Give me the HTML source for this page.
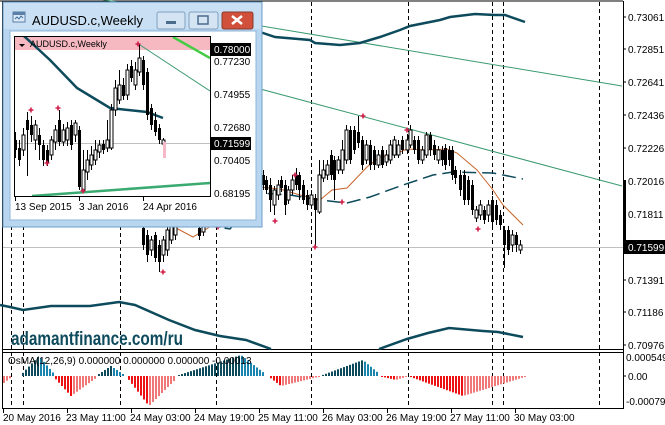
<!DOCTYPE html>
<html><head><meta charset="utf-8"><style>
html,body{margin:0;padding:0;background:#fff;width:665px;height:425px;overflow:hidden}
svg{display:block;font-family:"Liberation Sans",sans-serif}
</style></head><body>
<svg id="s" width="665" height="425" viewBox="0 0 665 425" xmlns="http://www.w3.org/2000/svg">
<rect x="0" y="0" width="665" height="425" fill="#fff"/>
<line x1="0" y1="1" x2="623" y2="1" stroke="#000"/>
<line x1="2.5" y1="1" x2="2.5" y2="408" stroke="#000"/>
<line x1="623.5" y1="1" x2="623.5" y2="409" stroke="#000"/>
<line x1="2" y1="349.5" x2="624" y2="349.5" stroke="#000"/>
<line x1="2" y1="352.5" x2="624" y2="352.5" stroke="#000"/>
<line x1="2" y1="408.5" x2="624" y2="408.5" stroke="#000"/>
<g id="vd" stroke="#000" stroke-dasharray="4 3"></g>
<line x1="3" y1="247.5" x2="623" y2="247.5" stroke="#c0c0c0"/>
<line x1="3" y1="-17" x2="622" y2="86" stroke="#3a9a70" stroke-width="1"/>
<line x1="3" y1="20" x2="622" y2="186" stroke="#3a9a70" stroke-width="1"/>
<polyline fill="none" stroke="#0d4a5c" stroke-width="2.5" points="260,32 275,37 310,40 315,43 340,45 360,43 380,37 400,30 410,26 440,20 450,17 475,14 495,15 505,15 525,22"/>
<polyline fill="none" stroke="#0d4a5c" stroke-width="2.5" points="0,305 10,307 23,310 51,306 90,306 119,302 135,305 169,320 195,330 220,336 246,340 271,349"/>
<polyline fill="none" stroke="#0d4a5c" stroke-width="2.5" points="379,349 407,339 428,333 449,328 483,331 498,332 523,337"/>
<polyline fill="none" stroke="#0d4a5c" stroke-width="1.5" stroke-dasharray="14 6" points="185,222 230,229 260,193 290,195 320,200 347,203 370,197 403,185 433,175 453,172 493,173 523,179"/>
<polyline fill="none" stroke="#c8642a" stroke-width="1" points="176,228 193,237 208,228 230,210 260,187 280,189 300,195 320,200 332,190 347,188 367,167 380,157 393,155 407,149 427,150 447,149 457,153 477,170 493,190 503,205 523,225"/>
<g id="mc"></g>
<g id="st" fill="#d0204a"></g>
<text x="11" y="345" font-size="19" font-weight="bold" fill="#0d4a5c" textLength="172" lengthAdjust="spacingAndGlyphs">adamantfinance.com/ru</text>
<g id="hist"></g>
<text x="8" y="364" font-size="10" fill="#000">OsMA(12,26,9) 0.000000 0.000000 0.000000 -0.00013</text>
<g font-size="10" fill="#000">
<text x="628" y="21">0.73061</text><text x="628" y="53">0.72851</text><text x="628" y="86">0.72641</text>
<text x="628" y="119">0.72436</text><text x="628" y="152">0.72226</text><text x="628" y="185">0.72016</text>
<text x="628" y="218">0.71811</text><text x="628" y="284">0.71391</text><text x="628" y="316">0.71186</text>
<text x="628" y="349">0.70976</text><text x="626" y="361">0.000549</text><text x="628" y="380">0.00</text><text x="626" y="405">-0.00079</text>
</g>
<g stroke="#000"><line x1="623" y1="17" x2="626" y2="17"/><line x1="623" y1="49" x2="626" y2="49"/><line x1="623" y1="82" x2="626" y2="82"/><line x1="623" y1="115" x2="626" y2="115"/><line x1="623" y1="148" x2="626" y2="148"/><line x1="623" y1="214" x2="626" y2="214"/><line x1="623" y1="280" x2="626" y2="280"/><line x1="623" y1="312" x2="626" y2="312"/><line x1="623" y1="345" x2="626" y2="345"/><line x1="623" y1="376" x2="626" y2="376"/></g>
<rect x="623" y="180" width="3" height="67" fill="#000"/>
<rect x="624" y="240" width="41" height="14" fill="#000"/>
<text x="628" y="251" font-size="10" fill="#fff">0.71599</text>
<g font-size="10" fill="#000">
<text x="3" y="421">20 May 2016</text><text x="66" y="421">23 May 11:00</text><text x="130" y="421">24 May 03:00</text>
<text x="194" y="421">24 May 19:00</text><text x="258" y="421">25 May 11:00</text><text x="322" y="421">26 May 03:00</text>
<text x="386" y="421">26 May 19:00</text><text x="450" y="421">27 May 11:00</text><text x="514" y="421">30 May 03:00</text>
</g>
<g stroke="#000"><line x1="3.5" y1="409" x2="3.5" y2="413"/><line x1="67.5" y1="409" x2="67.5" y2="413"/><line x1="131.5" y1="409" x2="131.5" y2="413"/><line x1="195.5" y1="409" x2="195.5" y2="413"/><line x1="259.5" y1="409" x2="259.5" y2="413"/><line x1="323.5" y1="409" x2="323.5" y2="413"/><line x1="387.5" y1="409" x2="387.5" y2="413"/><line x1="451.5" y1="409" x2="451.5" y2="413"/><line x1="515.5" y1="409" x2="515.5" y2="413"/></g>

<rect x="3" y="2" width="259" height="225" fill="#b8d6f0" stroke="#6f9fc8"/>
<rect x="4" y="3" width="257" height="26" fill="#c9e0f4"/>
<rect x="10" y="31" width="246" height="189" fill="#fff" stroke="#8fb5d8"/>
<g transform="translate(13,12)"><rect x="0" y="0" width="12" height="10" fill="#dde9f5" stroke="#5a7fa8"/><rect x="0" y="0" width="12" height="3" fill="#5a7fa8"/><path d="M2 7 l2 -2 2 2 2 -3 2 2" stroke="#3a70a0" fill="none"/></g>
<text x="32" y="25" font-size="13" fill="#000">AUDUSD.c,Weekly</text>
<rect x="157" y="12" width="28" height="17" rx="2" fill="#d4e4f2" stroke="#7f9fbf"/>
<rect x="166" y="21" width="10" height="3" fill="#4b6b8b"/>
<rect x="189" y="12" width="29" height="17" rx="2" fill="#d4e4f2" stroke="#7f9fbf"/>
<rect x="198" y="16" width="10" height="8" fill="none" stroke="#4b6b8b" stroke-width="1.5"/>
<rect x="222" y="12" width="31" height="17" rx="2" fill="#d0503c" stroke="#8a3a2c"/>
<path d="M232 16 l10 8 M242 16 l-10 8" stroke="#fff" stroke-width="2.5"/>
<svg x="14" y="36" width="196" height="160" viewBox="14 36 196 160" overflow="hidden">
<rect x="14" y="36" width="196" height="14" fill="#f6b9c2"/>
<line x1="14" y1="143.5" x2="210" y2="143.5" stroke="#c0c0c0"/>
<line x1="137" y1="43" x2="210" y2="91" stroke="#3a9a70"/>
<line x1="173" y1="37" x2="210" y2="58" stroke="#44cc44" stroke-width="2.5"/>
<line x1="32" y1="196" x2="210" y2="183" stroke="#3aaa70" stroke-width="2.5"/>
<polyline fill="none" stroke="#0d4a5c" stroke-width="2.5" points="20,33 25,37 50,60 77,88 110,108 147,112 163,118"/>
<g id="ic"></g>
<rect x="163" y="142" width="3" height="16" fill="#f4b8c6"/>
<g fill="#d0204a" id="ist"></g>
<path d="M19 44 l6 0 -3 3z" fill="#000"/>
<text x="30" y="47" font-size="9" fill="#000">AUDUSD.c,Weekly</text>
</svg>
<rect x="14.5" y="36.5" width="196" height="160" fill="none" stroke="#000"/>
<g font-size="10" fill="#000">
<text x="214" y="65">0.77230</text><text x="214" y="98">0.74955</text><text x="214" y="131">0.72680</text>
<text x="214" y="164">0.70405</text><text x="214" y="197">0.68195</text>
<text x="15" y="210">13 Sep 2015</text><text x="79" y="210">3 Jan 2016</text><text x="143" y="210">24 Apr 2016</text>
</g>
<rect x="211" y="43" width="40" height="13" fill="#000"/><text x="214" y="53" font-size="10" fill="#fff">0.78000</text>
<rect x="211" y="137" width="40" height="13" fill="#000"/><text x="214" y="147" font-size="10" fill="#fff">0.71599</text>
<g stroke="#000"><line x1="15.5" y1="197" x2="15.5" y2="201"/><line x1="79.5" y1="197" x2="79.5" y2="201"/><line x1="143.5" y1="197" x2="143.5" y2="201"/></g>
</svg>
<script>
var NS="http://www.w3.org/2000/svg";
function el(p,t,a){var e=document.createElementNS(NS,t);for(var k in a)e.setAttribute(k,a[k]);p.appendChild(e);return e;}
var vd=document.getElementById('vd');
[11,23,120,216,311,408,492,503,599].forEach(function(x){el(vd,'line',{x1:x+.5,y1:2,x2:x+.5,y2:408});});
function candles(g,arr){arr.forEach(function(c){var x=c[0],t=c[1],b=c[2],h=c[3]||t-4,l=c[4]||b+4,f=c[5];
el(g,'line',{x1:x+.5,y1:h,x2:x+.5,y2:l,stroke:'#000'});
el(g,'rect',{x:x-1,y:t,width:3,height:Math.max(1,b-t),fill:f?'#000':'#fff',stroke:'#000','stroke-width':f?0:1});});}
candles(document.getElementById('mc'),[
[143,228,245,225,250,1],[147,235,255,230,262,1],[151,240,250,236,256,0],[155,235,258,232,262,1],[159,245,262,240,272,1],[163,240,255,236,262,0],[167,230,250,226,256,0],[171,215,240,210,244,0],[175,220,235,216,240,0],
[199,228,236,226,240,1],[203,226,232,224,236,0],
[263,175,185,170,190,1],[266,180,190,176,194,1],[270,185,200,178,212,1],[274,190,205,186,215,0],[278,185,195,180,200,0],[281,180,188,176,192,1],[285,185,205,180,215,1],[288,190,200,186,204,0],[292,180,190,175,195,0],[296,175,185,168,190,1],[299,175,190,172,200,1],[303,185,200,180,204,1],[307,195,205,190,210,1],[311,195,205,190,208,0],[315,198,210,194,247,1],[319,175,212,160,214,0],[323,170,178,160,182,0],[327,165,175,160,180,0],[331,155,175,150,180,1],[334,160,180,156,200,1],[338,160,170,156,174,0],[342,150,170,140,174,0],[346,130,160,125,164,0],[350,130,160,126,164,1],[354,130,150,126,154,1],[358,132,143,116,148,1],[362,140,165,136,170,1],[366,145,160,140,164,0],[370,145,165,140,170,1],[374,150,165,146,170,1],[378,155,165,150,168,0],[382,150,165,146,168,1],[386,155,162,150,166,0],[390,145,160,140,164,0],[394,140,155,136,158,0],[398,145,155,140,158,0],[402,140,150,136,154,1],[407,140,150,134,154,0],[410,130,145,125,148,0],[414,140,150,136,154,1],[418,140,160,136,164,1],[422,150,160,146,164,0],[426,135,155,132,158,0],[430,135,150,132,156,1],[434,145,155,140,160,1],[438,150,160,146,164,0],[442,150,160,146,166,1],[445,148,165,144,170,1],[449,150,160,146,166,1],[452,150,175,146,180,1],[455,170,178,166,184,1],[460,175,190,170,196,1],[464,175,200,170,205,1],[468,180,200,176,205,1],[472,185,210,180,215,1],[476,210,218,206,222,0],[480,205,215,200,220,0],[484,210,220,206,224,1],[488,205,215,200,222,0],[492,200,222,196,226,1],[496,205,220,200,225,1],[500,215,225,210,230,1],[504,230,245,226,268,1],[508,230,250,226,255,1],[512,235,245,230,252,0],[516,235,245,232,252,1],[520,245,250,240,254,0]
]);
function star(g,x,y){el(g,'path',{d:'M'+(x-2.5)+' '+y+'h5M'+x+' '+(y-2.5)+'v5',stroke:'#d0204a','stroke-width':1.6});}
var st=document.getElementById('st');
[[163,272],[218,227],[275,221],[295,175],[315,247],[342,202],[363,116],[407,130],[478,229]].forEach(function(p){star(st,p[0],p[1]);});
candles(document.getElementById('ic'),[
[15,140,150,132,158,1],[19,148,160,140,166,1],[23,135,150,128,156,0],[27,120,130,112,176,1],[31,125,135,116,142,1],[35,125,140,120,150,0],[39,135,145,128,160,1],[43,145,160,140,166,1],[47,150,163,145,166,1],[51,140,155,136,160,0],[55,130,142,125,150,0],[59,120,142,110,146,1],[63,130,142,124,146,0],[67,128,140,122,146,0],[71,125,145,120,150,1],[75,123,135,120,142,0],[79,130,187,126,190,1],[83,170,190,150,192,0],[87,160,172,150,180,0],[91,155,165,146,170,0],[95,150,160,140,165,0],[99,145,152,140,158,0],[103,144,150,140,154,1],[107,140,148,120,152,0],[111,110,148,104,150,0],[115,88,110,80,116,0],[119,85,100,70,104,0],[123,85,96,78,100,1],[127,70,95,64,100,0],[131,66,78,60,82,1],[135,70,85,62,90,0],[139,58,72,44,76,0],[143,60,85,56,90,1],[147,72,115,68,120,1],[151,108,125,104,130,1],[155,120,132,112,136,1],[159,128,140,124,144,1],[163,140,144,138,148,0]
]);
var ist=document.getElementById('ist');
[[31,110],[58,108],[47,163],[83,191],[138,44]].forEach(function(p){star(ist,p[0],p[1]);});
var hg=document.getElementById('hist');
function seg(x0,x1,peak,px,c1,c2){for(var x=x0;x<=x1;x+=3){var h;if(x<=px)h=peak*(x-x0+3)/(px-x0+3);else h=peak*(x1-x+3)/(x1-px+3);
var col=x<=px?c1:c2;var y=376;el(hg,'rect',{x:x,y:h>0?y-h:y,width:2,height:Math.max(1,Math.abs(h)),fill:col});}}
var DB='#0d4a5c',LB='#1a86b0',R='#ee1111',LR='#f07878';
seg(3,9,-7,3,LR,LR);
seg(22,52,20,38,DB,LB);
seg(55,95,-20,70,R,LR);
seg(98,122,10,110,DB,LB);
seg(128,175,-30,148,R,LR);
seg(178,264,21,240,DB,LB);
seg(270,318,-10,280,R,LR);
seg(322,378,16,362,DB,LB);
seg(381,405,-4,395,R,LR);
seg(410,524,-20,462,R,LR);
</script>
</body></html>
